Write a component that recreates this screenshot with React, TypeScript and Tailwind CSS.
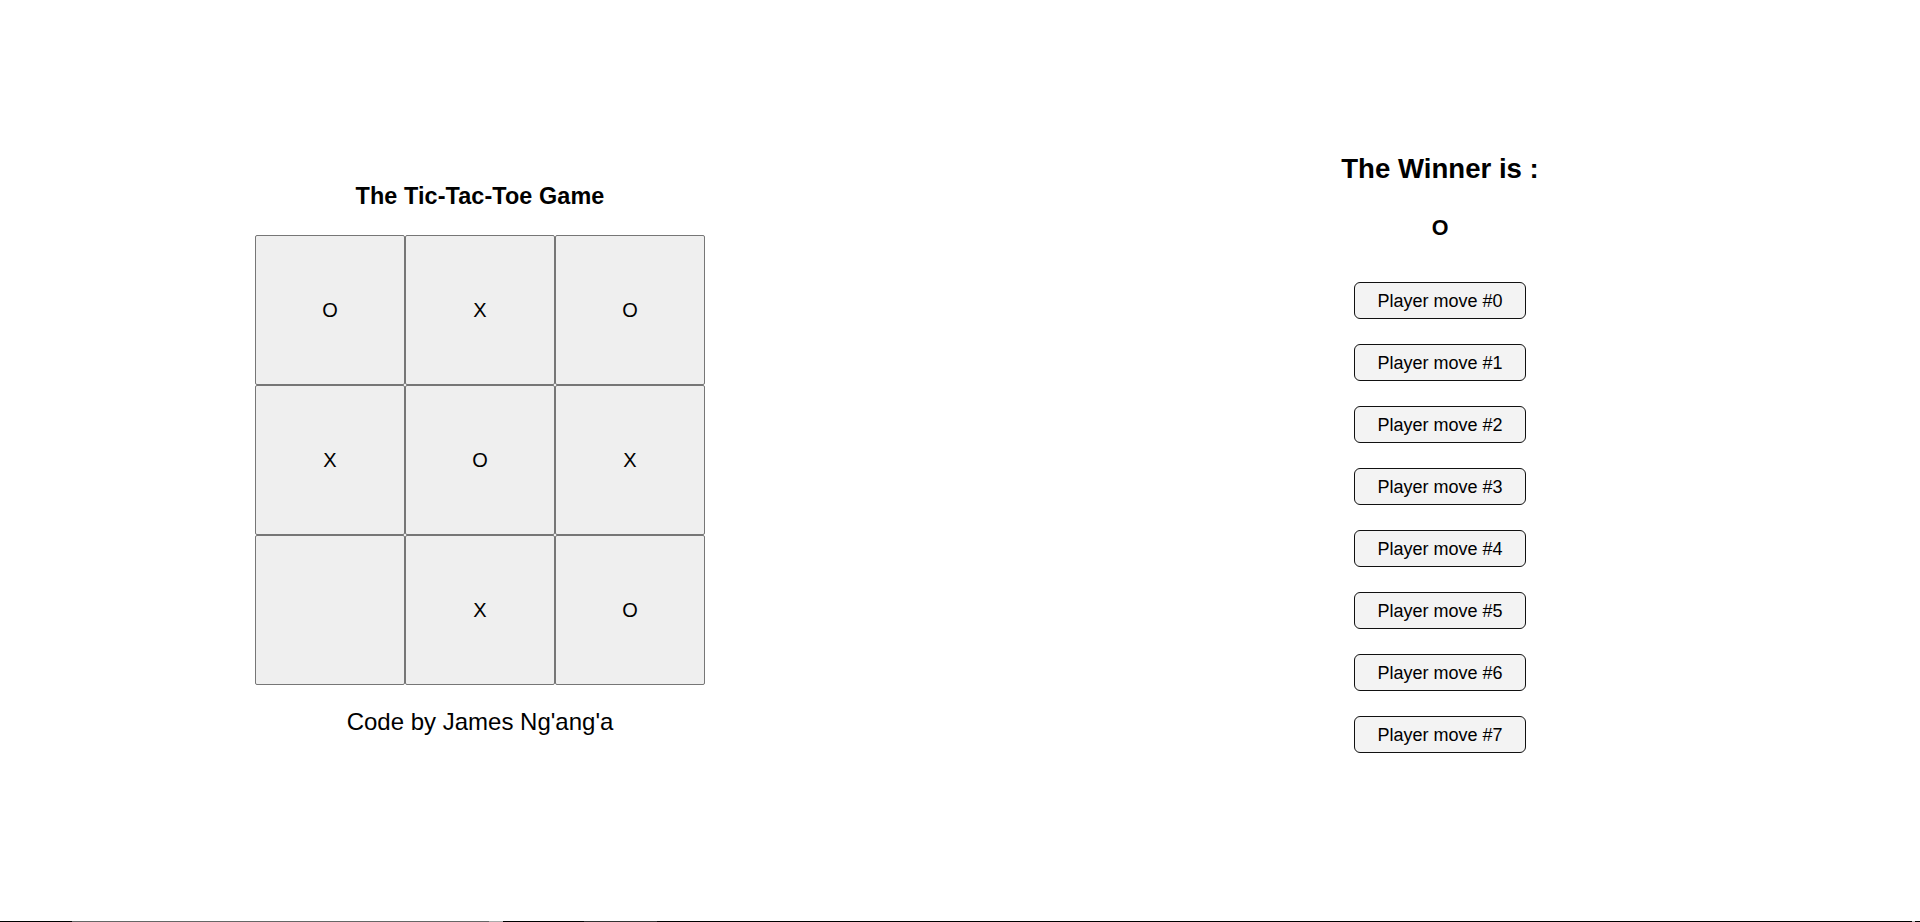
import React from "react";

const board: string[] = ["O", "X", "O", "X", "O", "X", "", "X", "O"];

export default function App() {
  return (
    <div
      className="h-[922px] w-full flex flex-col bg-white text-black overflow-hidden"
      style={{ fontFamily: '"Liberation Sans", Arial, sans-serif' }}
    >
      <main className="flex-1 flex flex-row">
        <section className="w-1/2 flex flex-col items-center pt-[183px]">
          <h3 className="text-[23.4px] leading-[27px] font-bold tracking-[0.1px]">The Tic-Tac-Toe Game</h3>
          <div className="mt-[25px] grid grid-cols-[150px_150px_150px] grid-rows-[150px_150px_150px]">
            {board.map((v, i) => (
              <button
                key={i}
                className="w-[150px] h-[150px] border border-[#767676] rounded-[2px] bg-[#efefef] text-[20px] leading-none text-black flex items-center justify-center"
              >
                {v}
              </button>
            ))}
          </div>
          <p className="mt-[23px] text-[24px] leading-[28px]">Code by James Ng'ang'a</p>
        </section>
        <section className="w-1/2 flex flex-col items-center pt-[153px]">
          <h2 className="text-[27.6px] leading-[32px] font-bold">The Winner is :</h2>
          <h3 className="mt-[31px] text-[21.5px] leading-[24px] font-bold">O</h3>
          <ol className="mt-[42px] flex flex-col gap-[25px]">
            {Array.from({ length: 8 }).map((_, i) => (
              <li key={i}>
                <button className="w-[172px] h-[37px] border border-[#111111] rounded-[6px] bg-[#f3f3f3] text-[18px] leading-none text-black flex items-center justify-center">
                  Player move #{i}
                </button>
              </li>
            ))}
          </ol>
        </section>
      </main>
      <div className="h-px flex flex-row shrink-0">
        <div className="w-[72px] bg-black" />
        <div className="w-[417px] bg-[#666666]" />
        <div className="w-[14px] bg-[#aaaaaa]" />
        <div className="w-[81px] bg-black" />
        <div className="w-[73px] bg-[#333333]" />
        <div className="flex-1 bg-black" />
        <div className="w-[3px] bg-[#bbbbbb]" />
        <div className="w-[5px] bg-black" />
      </div>
    </div>
  );
}
